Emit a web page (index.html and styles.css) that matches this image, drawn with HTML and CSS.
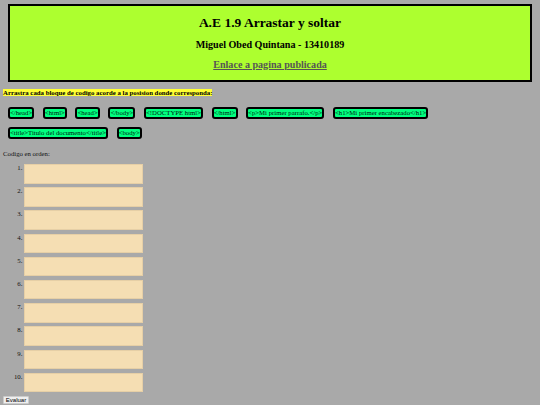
FILE: index.html
```html
<!DOCTYPE html>
<html lang="es">
  <head>
    <meta charset="UTF-8" />
    <title>A.E 1.9 Arrastar y soltar</title>
    <link rel="stylesheet" href="styles.css">
  </head>
  <body>
    <header class="banner">
      <h1>A.E 1.9 Arrastar y soltar</h1>
      <h2>Miguel Obed Quintana - 13410189</h2>
      <a href="#" class="pub-link">Enlace a pagina publicada</a>
    </header>

    <p class="instructions"><mark>Arrastra cada bloque de codigo acorde a la posision donde corresponda:</mark></p>

    <div class="blocks">
      <span class="block">&lt;/head&gt;</span>
      <span class="block">&lt;html&gt;</span>
      <span class="block">&lt;head&gt;</span>
      <span class="block">&lt;/body&gt;</span>
      <span class="block">&lt;!DOCTYPE html&gt;</span>
      <span class="block">&lt;/html&gt;</span>
      <span class="block">&lt;p&gt;Mi primer parrafo.&lt;/p&gt;</span>
      <span class="block">&lt;h1&gt;Mi primer encabezado&lt;/h1&gt;</span>
      <span class="block">&lt;title&gt;Titulo del documento&lt;/title&gt;</span>
      <span class="block">&lt;body&gt;</span>
    </div>

    <p class="order-label">Codigo en orden:</p>

    <ol class="slots">
      <li><div class="slot"></div></li>
      <li><div class="slot"></div></li>
      <li><div class="slot"></div></li>
      <li><div class="slot"></div></li>
      <li><div class="slot"></div></li>
      <li><div class="slot"></div></li>
      <li><div class="slot"></div></li>
      <li><div class="slot"></div></li>
      <li><div class="slot"></div></li>
      <li><div class="slot"></div></li>
    </ol>

    <button class="check">Evaluar</button>
  </body>
</html>
```

FILE: styles.css
```css
* {
  box-sizing: border-box;
}

html {
  height: 100%;
  overflow: hidden;
}

body {
  margin: 0;
  padding: 4px 3px 0;
  background: #a9a9a9;
  color: #000;
  font-family: "Liberation Serif", "Times New Roman", serif;
  font-size: 6.75px;
}

.banner {
  margin: 0 5px;
  height: 78px;
  padding-top: 9px;
  background: #adff2f;
  border: 2px solid #000;
  text-align: center;
}

.banner h1 {
  margin: 0;
  font-size: 13.5px;
  line-height: 16px;
}

.banner h2 {
  margin: 8px 0 0;
  font-size: 10.1px;
  line-height: 12px;
}

.pub-link {
  display: block;
  margin-top: 8px;
  color: #555;
  font-size: 10.1px;
  line-height: 12px;
  font-weight: bold;
}

.instructions {
  margin: 7px 0 0;
  font-size: 6.8px;
  font-weight: bold;
  line-height: 8px;
}

.instructions mark {
  background: #ffff33;
}

.blocks {
  display: flex;
  flex-wrap: wrap;
  gap: 8px 8.6px;
  padding: 10px 5px 0;
}

.block {
  height: 12px;
  padding: 0;
  background: #00ff7f;
  border: 2px solid #000;
  border-radius: 3px;
  line-height: 8px;
  color: #021;
}

.order-label {
  margin: 11px 0 0;
  line-height: 8px;
  color: #111;
}

.slots {
  margin: 6px 0 0;
  padding: 0 0 0 21px;
  color: #111;
}

.slots li {
  margin-bottom: 3.7px;
  line-height: 8px;
}

.slot {
  width: 119px;
  height: 19.5px;
  background: #f5deb3;
  border: 1px solid #e6cfa6;
}

.check {
  display: block;
  width: 26px;
  height: 8px;
  margin-top: 4px;
  padding: 0;
  background: #efefef;
  border: 1px solid #ccc;
  border-radius: 1px;
  font-family: "Liberation Sans", Arial, sans-serif;
  font-size: 6px;
  line-height: 6px;
}
```
